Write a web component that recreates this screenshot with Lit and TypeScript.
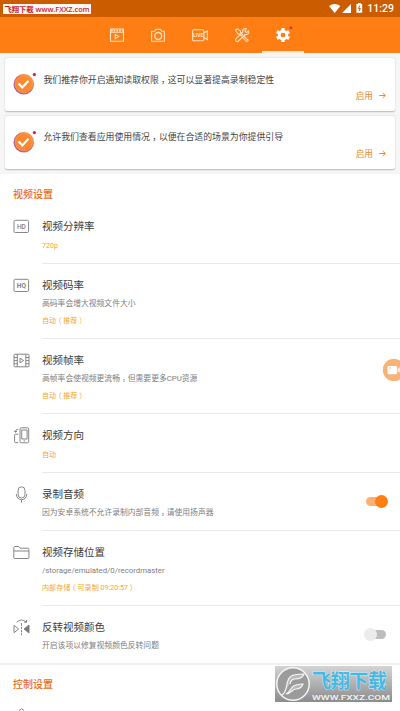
import { LitElement, html, css, svg, nothing } from "lit";
import { customElement, property } from "lit/decorators.js";

const label = (t: string, bold = false) => svg`
  <rect x="1" y="2.3" width="14.6" height="12.2" rx="1.3"/>
  <text x="8.4" y="10.9" text-anchor="middle" font-family="Roboto, sans-serif" font-size="6.6"
    font-weight=${bold ? 700 : 500} fill="#808080" stroke="none">${t}</text>`;

const icons: Record<string, unknown> = {
  hd: label("HD"),
  hq: label("HQ", true),
  film: svg`<rect x="1" y="2.2" width="15" height="12.6" rx="1"/><path d="M4.3 2.2v12.6M12.8 2.2v12.6M1 5.5h3.3M1 8.6h3.3M1 11.7h3.3M12.8 5.5H16M12.8 8.6H16M12.8 11.7H16M7 6.2v4.6l3.6-2.3z"/>`,
  rotate: svg`<rect x="7" y=".8" width="8.7" height="15" rx="1.2"/><path d="M8.7 3h5.4v9H8.7zM10.5 14h1.8M5.3 15.6H2.6a1 1 0 0 1-1-1V8.2a1 1 0 0 1 1-1h2.7M5.3 2.3C3.4 2.3 2.5 3.3 2.4 5M1.2 3.7l1.2 1.6 1.6-1.1"/>`,
  mic: svg`<rect x="5.1" y=".8" width="6.9" height="11.2" rx="3.45"/><path d="M3.3 8c0 7.6 10.5 7.6 10.5 0M8.5 13.8v2.7"/>`,
  folder: svg`<path d="M.8 13.5v-10q0-1 1-1h4l1.4 1.7h7.7q1 0 1 1v8.3q0 1-1 1H1.8q-1 0-1-1zM.8 7h15"/>`,
  flip: svg`<path d="M1 6.3v7.4l4.6-3.7z"/><path d="M8.5 4.2v12" stroke-dasharray="2.4 1"/><path d="M16 6v8l-5-4z" fill="#777"/><path d="M3.7 3.1Q8.5-1 13.2 3M13.5.9v2.4h-2.3"/>`,
};

// Full-width punctuation is set half-width and centred in a one-em slot.
const punctuated = (text: string) =>
  text.split(/([，（）])/).map((part) => (/^[，（）]$/.test(part) ? html`<span class="mark">${part}</span>` : part));
const punctuation = css`
  .mark { font-feature-settings: "halt"; padding: 0 0.25em; }
`;

@customElement("setting-row")
class SettingRow extends LitElement {
  @property() icon = "";
  @property() heading = "";
  @property() desc = "";
  @property() value = "";
  @property() toggle = "";

  static styles = [punctuation, css`
    :host { display: flex; flex: none; box-sizing: border-box; padding-left: 13px; }
    svg { width: 17px; height: 17px; margin: 12.6px 12px 0 0; flex: none; overflow: visible; fill: none; stroke: #808080; stroke-width: 0.95; }
    :host(.first) svg { margin-top: 13.5px; }
    .body { flex: 1; display: flex; box-sizing: border-box; border-bottom: 1px solid #e9e9e9; padding-top: 12px; }
    :host(.first) .body { padding-top: 13px; }
    .text { flex: 1; color: #808080; font-size: 7.8px; line-height: 17px; white-space: nowrap; }
    .heading { color: #3c3c3c; font-size: 10.5px; line-height: 19px; }
    .value { color: #f9a51c; font-size: 7.1px; line-height: 17px; }
    .only { padding-top: 1px; }
    .toggle { position: relative; width: 20px; height: 9px; border-radius: 5px; background: #bdbdbd; margin: 12px 14px 0 0; }
    .toggle::after { content: ""; position: absolute; left: -2px; top: -2px; width: 13px; height: 13px; border-radius: 50%; background: #ececec; }
    .on { background: #ffb070; }
    .on::after { left: 8.5px; background: #ff7e14; }
  `];

  render() {
    return html`
      <svg viewBox="0 0 17 17">${icons[this.icon]}</svg>
      <div class="body">
        <div class="text">
          <div class="heading">${this.heading}</div>
          ${this.desc ? html`<div>${punctuated(this.desc)}</div>` : nothing}
          ${this.value ? html`<div class="value ${this.desc ? "" : "only"}">${punctuated(this.value)}</div>` : nothing}
        </div>
        ${this.toggle ? html`<div class="toggle ${this.toggle}"></div>` : nothing}
      </div>`;
  }
}

@customElement("app-root")
class AppRoot extends LitElement {
  static styles = [punctuation, css`
    :host { display: flex; flex-direction: column; position: relative; width: 400px; height: 711px; overflow: hidden; background: #fff; font-family: Roboto, "Noto Sans CJK SC", sans-serif; }
    svg { display: block; overflow: visible; }
    .status { height: 17px; flex: none; background: #cb5d00; display: flex; justify-content: space-between; color: #fff; }
    .site { height: 10px; margin: 4px 0 0 3px; width: 88px; background: #fff8f4; color: #c91a2b; font: 600 7.3px/11px "Open Sans", "Noto Sans CJK SC", sans-serif; white-space: nowrap; text-align: center; overflow: hidden; }
    .system { display: flex; align-items: center; padding-right: 6px; font-size: 10.5px; font-weight: 500; }
    .system svg { width: 38px; height: 17px; }
    .tabs { height: 36px; flex: none; background: #ff7e14; display: flex; padding-left: 96px; }
    .tab { width: 41.6px; height: 36px; box-sizing: border-box; padding-top: 10px; display: flex; justify-content: center; }
    .tab svg { width: 16px; height: 16px; fill: none; stroke: #ffe0c0; stroke-width: 1.1; }
    .active { border-bottom: 2px solid #ffe8d5; }
    .notices { flex: none; height: 121px; background: #f6f6f6; box-sizing: border-box; padding: 5px 5px 0; display: flex; flex-direction: column; gap: 5px; }
    .card { height: 52.8px; background: #fff; border-radius: 2px; box-shadow: 0 0.5px 1.5px rgba(0,0,0,.25); display: flex; }
    .card > svg { width: 24px; height: 24px; margin: 14px 0 0 8px; flex: none; }
    .message { font-size: 8.88px; line-height: 14px; margin: 14.6px 0 0 6.5px; color: #444; flex: 1; white-space: nowrap; }
    .enable { display: flex; align-items: center; gap: 6px; align-self: flex-end; color: #e88a2c; font-size: 8.7px; line-height: 12px; margin: 0 9px 9px 0; }
    .enable svg { width: 7px; height: 7px; fill: none; stroke: #e88a2c; }
    h2 { margin: 0; flex: none; padding: 13.5px 0 0 13px; font-size: 10px; line-height: 14px; font-weight: 500; color: #ec6a20; height: 30px; box-sizing: border-box; }
    .h59 { height: 59px; } .h60 { height: 60px; } .h75 { height: 75px; } .h58 { height: 58px; }
    .line { height: 1.5px; flex: none; background: #f1f1f1; margin-top: -1px; z-index: 1; }
    .peek { width: 17px; height: 17px; margin: 8px 0 0 13px; flex: none; fill: none; stroke: #888; }
    .float { position: absolute; left: 383px; top: 359px; width: 22px; height: 22px; border-radius: 50%; background: #f9b277; box-shadow: 0 0 1px #f9b277; }
    .float svg { width: 22px; height: 22px; fill: #fff; }
    .brand { position: absolute; left: 275px; top: 666px; width: 117px; height: 36px; background: linear-gradient(#d4d4d4, #8c8c8c); }
    .brand svg { width: 117px; height: 36px; }
  `];

  private card(text: string) {
    return html`<div class="card">
      <svg viewBox="0 0 24 24">
        <defs><linearGradient id="ring" x1="1" y1="0" x2="0" y2="1"><stop offset="0" stop-color="#ffad35"/><stop offset=".45" stop-color="#e0704c"/><stop offset="1" stop-color="#a653b3"/></linearGradient></defs>
        <circle cx="10.8" cy="12.2" r="10.3" fill="url(#ring)"/><circle cx="10.8" cy="12.2" r="8.6" fill="#fb8832" stroke="#ffb16a" stroke-width=".5"/>
        <path d="M5.7 11.5l3.6 3.9 6.2-6.7" fill="none" stroke="#fff" stroke-width="2.2"/>
        <circle cx="21.4" cy="2.6" r="1.6" fill="#d91e3f"/>
      </svg>
      <div class="message">${punctuated(text)}</div>
      <div class="enable">启用<svg viewBox="0 0 7 7"><path d="M.3 3.5h6M3.7 1l2.6 2.5L3.7 6"/></svg></div>
    </div>`;
  }

  render() {
    return html`
      <div class="status">
        <div class="site">飞翔下载 www.FXXZ.com</div>
        <div class="system">
          <svg viewBox="0 0 38 17"><g fill="#fff"><path d="M0 6Q5.7 1.8 11.4 6L5.7 13zM22 4v9h-9z"/><path d="M28.8 3h3v1h1.4v8.7h-5.8V4h1.4z"/></g><path d="M30.8 5.5l-1.3 3h1.8l-1.2 2.6" stroke="#cb5d00" fill="none"/></svg>
          11:29
        </div>
      </div>
      <div class="tabs">
        <div class="tab"><svg viewBox="0 0 16 16"><path d="M1.5 2h13v12.3h-13zM1.5 5.2h13M6.2 7.4v4.3l3.5-2.1z"/><path d="M2 3.6h12" stroke-width="2" stroke-dasharray="1.7 1"/></svg></div>
        <div class="tab"><svg viewBox="0 0 16 16"><path d="M1.6 4.2h3l1.3-2h4.5l1.3 2h2.7v10H1.6z" stroke-linejoin="round"/><circle cx="8.2" cy="8.9" r="3.4" stroke-width="1.3"/></svg></div>
        <div class="tab"><svg viewBox="0 0 16 16"><rect x=".6" y="2.7" width="11.3" height="11" rx="1.2"/><path d="M11.9 6l3.4-2v8.5l-3.4-2"/><text x="6.2" y="10.2" text-anchor="middle" font-family="Roboto" font-size="5" font-weight="700" stroke="none" fill="#ffe5cc">LIVE</text></svg></div>
        <div class="tab"><svg viewBox="0 0 16 16" stroke-linejoin="round"><path d="M1.5 3l1.8-1.3 3 2.2.3 1.8 2 2-1.3 1.2-2-2-1.8-.3zM9.4 9l4.8 4.1-1.5 1.6-4.5-4.6M14.6 3.6l-2.1 2-1.8-1.8 1.9-2.1C9.8.7 8 3 8.8 5L2 11.6c-1.6 1.8.8 4 2.5 2.4L11.2 7.5c2.6.8 4.3-1.5 3.4-3.9z"/></svg></div>
        <div class="tab active"><svg viewBox="0 0 16 16"><circle cx="8" cy="8" r="3.7" stroke="#fff" stroke-width="3"/><path d="M8 1v3M8 12v3M1.9 4.5l2.7 1.6M11.4 9.9l2.7 1.6M1.9 11.5l2.7-1.6M11.4 6.1l2.7-1.6" stroke="#fff" stroke-width="3.3"/><circle cx="8" cy="8" r="2.3" fill="#ff7e14" stroke="none"/><circle cx="15.9" cy=".8" r="1.4" fill="#f5260c" stroke="none"/></svg></div>
      </div>
      <div class="notices">
        ${this.card("我们推荐你开启通知读取权限，这可以显著提高录制稳定性")}
        ${this.card("允许我们查看应用使用情况，以便在合适的场景为你提供引导")}
      </div>
      <h2>视频设置</h2>
      <setting-row class="h60 first" icon="hd" heading="视频分辨率" value="720p"></setting-row>
      <setting-row class="h75" icon="hq" heading="视频码率" desc="高码率会增大视频文件大小" value="自动（推荐）"></setting-row>
      <setting-row class="h75" icon="film" heading="视频帧率" desc="高帧率会使视频更流畅，但需要更多CPU资源" value="自动（推荐）"></setting-row>
      <setting-row class="h59" icon="rotate" heading="视频方向" value="自动"></setting-row>
      <setting-row class="h58" icon="mic" heading="录制音频" desc="因为安卓系统不允许录制内部音频，请使用扬声器" toggle="on"></setting-row>
      <setting-row class="h75" icon="folder" heading="视频存储位置" desc="/storage/emulated/0/recordmaster" value="内部存储（可录制 09:20:57）"></setting-row>
      <setting-row class="h58" icon="flip" heading="反转视频颜色" desc="开启该项以修复视频颜色反转问题" toggle="off"></setting-row>
      <div class="line"></div>
      <h2>控制设置</h2>
      <svg class="peek" viewBox="0 0 17 17"><path d="M6 7.5l2.5-1.8L11 7.5"/></svg>
      <div class="float"><svg viewBox="0 0 22 22"><rect x="4.5" y="7" width="9.5" height="8.3" rx="1"/><path d="M14.5 9.5L18 7.8v6.5l-3.5-1.7z" fill="#ffe6d0"/><circle cx="7" cy="9" r=".8" fill="#f9b277"/></svg></div>
      <div class="brand"><svg viewBox="0 0 117 36">
        <circle cx="18" cy="18" r="16.2" fill="#9b9b9b" stroke="#f5f5f5" stroke-width="1.5"/>
        <path d="M7 29C14 26 9 11 19 9q5-1 10-1-2 5-9 5-4 0-5 5M11 28c6-3 4-8 10-9q4-1 7-1-2 5-7 5c-4 0-4 4-10 5z" fill="#b8b8b8" stroke="#f5f5f5" stroke-width="1.2"/>
        <text x="37" y="22" textLength="75" font-family="Noto Sans CJK SC, sans-serif" font-size="19" font-weight="700" fill="#45b9e5" stroke="#e4f6fc" stroke-width=".7" paint-order="stroke">飞翔下载</text>
        <text x="37" y="33.5" textLength="78" lengthAdjust="spacingAndGlyphs" font-family="Roboto, sans-serif" font-size="8" font-weight="500" fill="#f4f4f4">WWW.FXXZ.COM</text>
      </svg></div>`;
  }
}
